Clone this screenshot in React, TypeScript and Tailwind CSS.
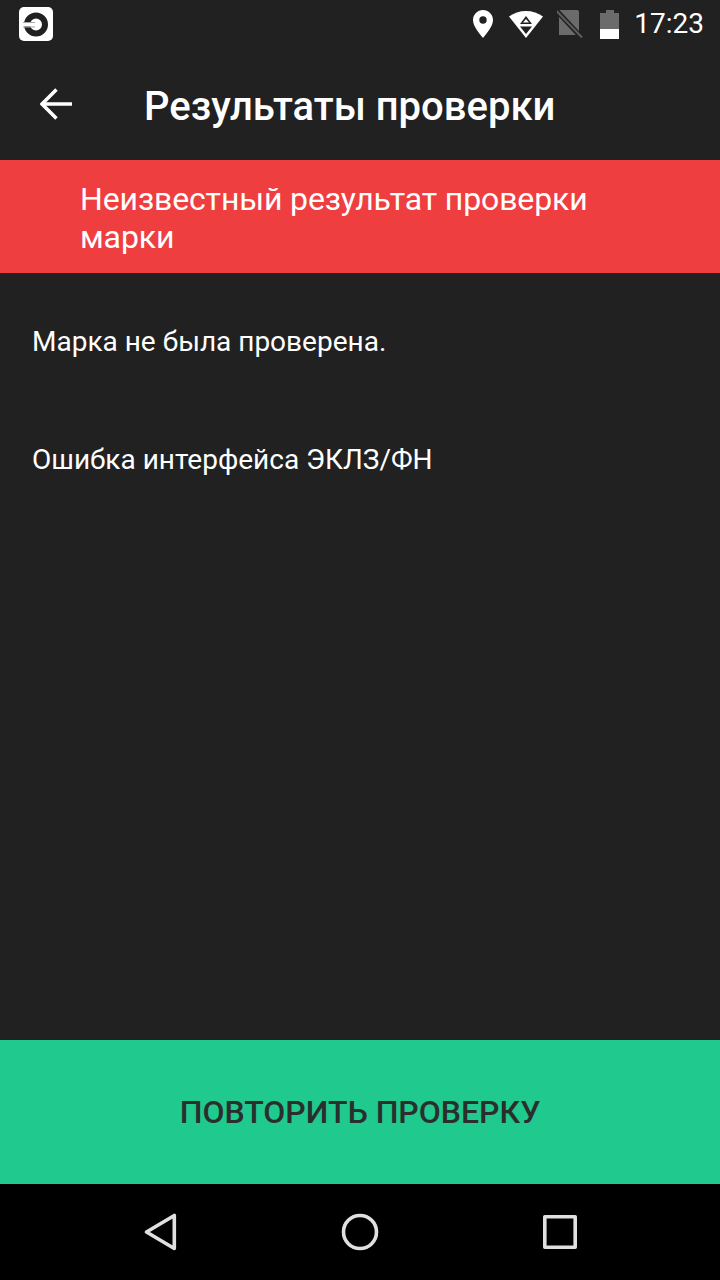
const roboto = "font-['Roboto',sans-serif]";

function StatusBar() {
  return (
    <div className="h-12 flex items-center justify-between pl-[19px] pr-4 bg-[#212121]">
      <svg width="34" height="34" viewBox="0 0 34 34">
        <rect width="34" height="34" rx="5" fill="#fff" />
        <circle cx="17" cy="17.500" r="9" fill="none" stroke="#212121" strokeWidth="6" />
        <rect x="4" y="16" width="16" height="3.500" fill="#fff" />
        <rect x="4" y="15" width="12" height="1" fill="#aaa" />
        <rect x="4" y="19.500" width="12" height="1" fill="#aaa" />
      </svg>
      <div className="flex items-center">
        <svg width="20" height="28" viewBox="0 0 20 28" className="mr-4">
          <path fillRule="evenodd" d="M10 0C4.500 0 0 4.500 0 10c0 6.500 6.500 13.500 10 18 3.500-4.500 10-11.500 10-18C20 4.500 15.500 0 10 0zm0 6.300a3.700 3.700 0 1 1 0 7.400 3.700 3.700 0 0 1 0-7.400z" fill="#fff" />
        </svg>
        <svg width="34" height="27" viewBox="0 0 34 27" className="mr-[14px]">
          <path d="M17 0C10.500 0 5 2 0 5.500L17 27 34 5.500C29 2 23.500 0 17 0z" fill="#fff" />
          <path d="M17 5l-6 8h12z" fill="#212121" />
          <path d="M17 8l-3 3.500h6z" fill="#fff" />
          <path d="M11 15.500h12L17 23z" fill="#212121" />
        </svg>
        <svg width="26" height="28" viewBox="0 0 26 28" className="mr-[17px]">
          <path d="M2 0h14l4 0q2 0 2 2v23H2z" fill="#6b6b6b" />
          <path d="M-1 0l25 27" stroke="#212121" strokeWidth="5" />
          <path d="M-1 0.500l26 27" stroke="#5e5e5e" strokeWidth="2" />
        </svg>
        <div className="w-[19px] h-[29px] mr-[15px] flex flex-col items-center">
          <div className="w-2 h-[3px] bg-[#6b6b6b]" />
          <div className="w-full h-4 bg-[#6b6b6b]" />
          <div className="w-full h-[10px] bg-white" />
        </div>
        <span className={`${roboto} text-[28px] leading-none text-white`}>17:23</span>
      </div>
    </div>
  );
}

function NavBar() {
  return (
    <div className="h-24 bg-black flex items-center justify-center gap-[160px] pb-px">
      <svg width="40" height="40" viewBox="0 0 40 40" fill="none" stroke="#e0e0e0" strokeWidth="3.600" strokeLinejoin="round">
        <path d="M6.500 20L34.300 3.500v33z" />
      </svg>
      <svg width="40" height="40" viewBox="0 0 40 40" fill="none" stroke="#e0e0e0" strokeWidth="3.600">
        <circle cx="20" cy="20" r="16.500" />
      </svg>
      <svg width="40" height="40" viewBox="0 0 40 40" fill="none" stroke="#e0e0e0" strokeWidth="3.600" strokeLinejoin="round">
        <rect x="4.800" y="4.800" width="30.400" height="30.400" />
      </svg>
    </div>
  );
}

export default function App() {
  return (
    <div className={`${roboto} w-[720px] h-[1280px] flex flex-col bg-[#212121] text-white`}>
      <StatusBar />
      <div className="h-28 flex items-center shrink-0">
        <div className="w-[144px] pl-10">
          <svg width="33" height="32" viewBox="0 0 33 32" fill="none" stroke="#fff" strokeWidth="3.500">
            <path d="M32 16H2M16.500 1.500L2 16l14.500 14.500" />
          </svg>
        </div>
        <h1 className="text-[40px] font-medium leading-none mt-[6px]">Результаты проверки</h1>
      </div>
      <div className="h-[113px] bg-[#ef3e40] pl-20 pr-[100px] pt-5 text-[32px] leading-[38px] tracking-[-0.13px]">
        Неизвестный результат проверки марки
      </div>
      <div className="flex-1 px-8 text-[28px] leading-9">
        <p className="mt-[51px]">Марка не была проверена.</p>
        <p className="mt-[82px]">Ошибка интерфейса ЭКЛЗ/ФН</p>
      </div>
      <div className="h-36 bg-[#20c98d] flex items-center justify-center text-[32px] font-medium text-[#2a2f2d]">
        ПОВТОРИТЬ ПРОВЕРКУ
      </div>
      <NavBar />
    </div>
  );
}
